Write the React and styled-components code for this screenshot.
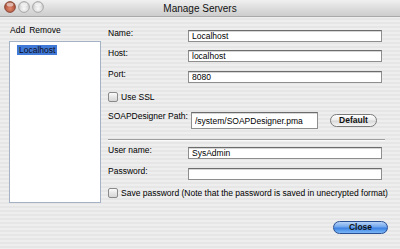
import styled, { createGlobalStyle } from "styled-components";

const GlobalStyle = createGlobalStyle`
    html, body {
        margin: 0;
        padding: 0;
        width: 400px;
        height: 249px;
        overflow: hidden;
        background: #ececec;
    }
    * {
        box-sizing: border-box;
    }
`;

const TrafficLight = ({ color }) => {
    const red = color === "red";
    const id = red ? "tlRed" : "tlGrey";
    return (
        <svg width="12" height="12" viewBox="0 0 12 12">
            <defs>
                <radialGradient id={id} cx="50%" cy="65%" r="60%">
                    <stop offset="0%" stopColor={red ? "#e0876d" : "#fafafa"} />
                    <stop offset="100%" stopColor={red ? "#a44a33" : "#c9c9c9"} />
                </radialGradient>
            </defs>
            <circle cx="6" cy="6" r="5.4" fill={`url(#${id})`} stroke={red ? "#7d3a2a" : "#9d9d9d"} strokeWidth="0.8" />
            <ellipse cx="6" cy="3.4" rx="3.4" ry="2" fill="#ffffff" opacity="0.55" />
        </svg>
    );
};

const App = () => {
    return (
        <>
            <GlobalStyle />
            <Window>
                <TitleBar>
                    <Lights>
                        <TrafficLight color="red" />
                        <TrafficLight color="grey" />
                        <TrafficLight color="grey" />
                    </Lights>
                    <Title>Manage Servers</Title>
                </TitleBar>
                <Body>
                    <LeftPane>
                        <ListTools>
                            <ToolLink>Add</ToolLink>
                            <ToolLink>Remove</ToolLink>
                        </ListTools>
                        <ServerList>
                            <ServerItem selected>Localhost</ServerItem>
                        </ServerList>
                    </LeftPane>
                    <Form>
                        <Row top={13}>
                            <Label>Name:</Label>
                            <TextInput defaultValue="Localhost" />
                        </Row>
                        <Row top={8}>
                            <Label>Host:</Label>
                            <TextInput defaultValue="localhost" />
                        </Row>
                        <Row top={9}>
                            <Label>Port:</Label>
                            <TextInput defaultValue="8080" />
                        </Row>
                        <CheckRow top={9}>
                            <CheckBox />
                            <CheckLabel>Use SSL</CheckLabel>
                        </CheckRow>
                        <Row top={11}>
                            <Label wide>SOAPDesigner Path:</Label>
                            <PathInput defaultValue="/system/SOAPDesigner.pma" />
                            <PillButton>Default</PillButton>
                        </Row>
                        <Separator />
                        <Row top={7}>
                            <Label>User name:</Label>
                            <TextInput defaultValue="SysAdmin" />
                        </Row>
                        <Row top={9}>
                            <Label>Password:</Label>
                            <TextInput type="password" />
                        </Row>
                        <CheckRow top={8}>
                            <CheckBox />
                            <CheckLabel>Save password (Note that the password is saved in unecrypted format)</CheckLabel>
                        </CheckRow>
                        <Footer>
                            <PillButton primary>Close</PillButton>
                        </Footer>
                    </Form>
                </Body>
            </Window>
        </>
    );
};

const Window = styled.div`
    width: 400px;
    height: 249px;
    display: flex;
    flex-direction: column;
    font-family: "Liberation Sans", Arial, sans-serif;
    font-size: 8.5px;
    color: #000;
    background: repeating-linear-gradient(
        to bottom,
        #eeeeee 0px,
        #eeeeee 2px,
        #e6e6e6 2px,
        #e6e6e6 4px
    );
`;

const TitleBar = styled.div`
    position: relative;
    height: 17px;
    flex: none;
    display: flex;
    align-items: center;
    justify-content: center;
    background: linear-gradient(to bottom, #f0f0f0 0%, #dadada 60%, #cdcdcd 100%);
    border-bottom: 1px solid #a9a9a9;
`;

const Lights = styled.div`
    position: absolute;
    left: 4px;
    top: 1px;
    display: flex;
    gap: 2px;
`;

const Title = styled.div`
    font-size: 10px;
    color: #111;
    padding-top: 1px;
`;

const Body = styled.div`
    flex: 1;
    display: flex;
`;

const LeftPane = styled.div`
    width: 108px;
    flex: none;
    padding-left: 9px;
    display: flex;
    flex-direction: column;
`;

const ListTools = styled.div`
    height: 24px;
    display: flex;
    align-items: center;
    gap: 4px;
    padding-left: 1px;
    padding-top: 2px;
`;

const ToolLink = styled.span`
    font-size: 8.5px;
    color: #000;
`;

const ServerList = styled.div`
    width: 92px;
    height: 162px;
    background: #fff;
    border: 1px solid #a5b1c4;
    padding: 3px 0 0 7px;
`;

const ServerItem = styled.div`
    display: inline-block;
    padding: 0 2px;
    height: 10px;
    line-height: 10px;
    background: ${(p) => (p.selected ? "#4179d6" : "transparent")};
    color: #0c0c20;
`;

const Form = styled.div`
    flex: 1;
    display: flex;
    flex-direction: column;
    padding-right: 18px;
`;

const Row = styled.div`
    display: flex;
    align-items: flex-start;
    margin-top: ${(p) => p.top}px;
`;

const Label = styled.div`
    width: ${(p) => (p.wide ? 83 : 80)}px;
    flex: none;
    line-height: 10px;
    margin-top: -2px;
    white-space: nowrap;
    color: #000;
`;

const TextInput = styled.input`
    width: 194px;
    height: 12px;
    padding: 0 3px;
    border: 1px solid #8e8e8e;
    border-top-color: #6c6c6c;
    background: #fff;
    font-family: inherit;
    font-size: 8.5px;
    color: #000;
    outline: none;
    box-shadow: inset 0 1px 0 #d6d6d6;
`;

const PathInput = styled(TextInput)`
    width: 127px;
    height: 17px;
    margin-top: -1px;
`;

const PillButton = styled.button`
    margin-left: ${(p) => (p.primary ? 0 : 12)}px;
    margin-top: 1px;
    width: ${(p) => (p.primary ? 55 : 47)}px;
    height: 13px;
    padding: 0;
    border-radius: 7px;
    border: 1px solid ${(p) => (p.primary ? "#2a4f93" : "#7b7b7b")};
    background: ${(p) =>
        p.primary
            ? "linear-gradient(to bottom, #b6d3f7 0%, #6fa6ec 45%, #3c82e2 55%, #7ab6f6 100%)"
            : "linear-gradient(to bottom, #ffffff 0%, #ececec 45%, #d9d9d9 55%, #f6f6f6 100%)"};
    font-family: inherit;
    font-size: 8.5px;
    font-weight: bold;
    color: #111;
    line-height: 11px;
`;

const CheckRow = styled.div`
    display: flex;
    align-items: center;
    gap: 3px;
    margin-top: ${(p) => p.top}px;
    height: 10px;
`;

const CheckBox = styled.span`
    width: 10px;
    height: 10px;
    flex: none;
    border: 1px solid #8a8a8a;
    border-radius: 2px;
    background: linear-gradient(to bottom, #fbfbfb 0%, #e6e6e6 50%, #d6d6d6 100%);
`;

const CheckLabel = styled.span`
    white-space: nowrap;
    color: #000;
`;

const Separator = styled.div`
    margin-top: 10px;
    width: 277px;
    height: 1px;
    background: #9e9e9e;
    box-shadow: 0 1px 0 #fafafa;
`;

const Footer = styled.div`
    display: flex;
    justify-content: flex-end;
    margin-top: 22px;
    width: 280px;
`;

export default App;
